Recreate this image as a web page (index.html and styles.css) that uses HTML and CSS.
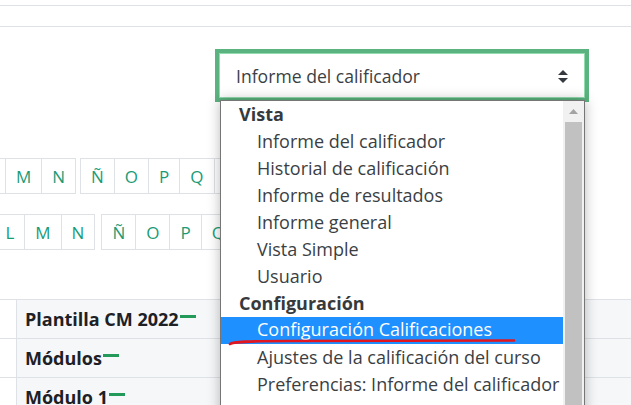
FILE: index.html
```html
<!DOCTYPE html>
<html lang="es">
<head>
	<meta charset="UTF-8">
	<title>Calificaciones</title>
	<link rel="stylesheet" href="styles.css">
</head>
<body>
	<div class="topbar"></div>

	<div class="page">
		<div class="jump">
			<div class="select">
				<span class="select-text">Informe del calificador</span>
				<svg class="select-arrows" width="10" height="13" viewBox="0 0 10 13">
					<path d="M5 0 L10 5 L0 5 Z" fill="#343a40"/>
					<path d="M0 8 L10 8 L5 13 Z" fill="#343a40"/>
				</svg>
			</div>
		</div>

		<div class="initials first">
			<div class="letters">
				<a class="letter">L</a><a class="letter">M</a><a class="letter">N</a>
			</div>
			<div class="letters">
				<a class="letter">Ñ</a><a class="letter">O</a><a class="letter">P</a><a class="letter">Q</a><a class="letter">R</a><a class="letter">S</a>
			</div>
		</div>
		<div class="initials last">
			<div class="letters">
				<a class="letter">K</a><a class="letter">L</a><a class="letter">M</a><a class="letter">N</a>
			</div>
			<div class="letters">
				<a class="letter">Ñ</a><a class="letter">O</a><a class="letter">P</a><a class="letter">Q</a><a class="letter">R</a><a class="letter">S</a>
			</div>
		</div>

		<div class="grades">
			<div class="grade-row">
				<div class="gutter"></div>
				<div class="cell">Plantilla CM 2022<span class="dash"></span></div>
			</div>
			<div class="grade-row">
				<div class="gutter"></div>
				<div class="cell">Módulos<span class="dash"></span></div>
			</div>
			<div class="grade-row">
				<div class="gutter"></div>
				<div class="cell">Módulo 1<span class="dash"></span></div>
			</div>
		</div>

		<!-- open list of the select, lies over the page -->
		<div class="dropdown">
			<div class="options">
				<div class="group">Vista</div>
				<div class="option">Informe del calificador</div>
				<div class="option">Historial de calificación</div>
				<div class="option">Informe de resultados</div>
				<div class="option">Informe general</div>
				<div class="option">Vista Simple</div>
				<div class="option">Usuario</div>
				<div class="group">Configuración</div>
				<div class="option selected">Configuración Calificaciones</div>
				<div class="option">Ajustes de la calificación del curso</div>
				<div class="option">Preferencias: Informe del calificador</div>
				<div class="option">Letras</div>
			</div>
			<div class="scrollbar">
				<div class="scroll-up">
					<svg width="9" height="5" viewBox="0 0 9 5"><path d="M4.5 0 L9 5 L0 5 Z" fill="#a3a3a3"/></svg>
				</div>
				<div class="thumb"></div>
			</div>
		</div>

		<svg class="underline" width="300" height="10" viewBox="0 0 300 10">
			<path d="M2 6 C 5 3.5, 20 3, 60 3 L 286 2.5" stroke="#e3161f" stroke-width="2.6" fill="none" stroke-linecap="round"/>
		</svg>
	</div>
</body>
</html>
```

FILE: styles.css
```css
html, body {
	margin: 0;
	padding: 0;
	background: #fff;
	overflow: hidden;
}

body {
	font-family: "Open Sans", "Noto Sans", sans-serif;
	color: #1d2125;
	width: 631px;
	height: 405px;
}

.topbar {
	margin-top: 5px;
	height: 20px;
	border-top: 1px solid #dee2e6;
	border-bottom: 1px solid #dee2e6;
}

.page {
	position: relative;
}

.jump {
	display: flex;
	padding: 22px 0 0 215px;
}

.select {
	box-sizing: border-box;
	width: 374px;
	height: 53px;
	border: 4px solid #5bb47f;
	box-shadow: inset 0 0 0 1px #93dcaf;
	display: flex;
	align-items: center;
	justify-content: space-between;
	padding: 0 17px 0 17px;
	background: #fff;
}

.select-text {
	font-size: 17.6px;
	color: #3b3f44;
	padding-top: 1px;
}

.select-arrows {
	margin-top: 1px;
}

/* initials bars */

.initials {
	display: flex;
	gap: 5px;
}

.initials.first {
	margin: 56px 0 0 -24px;
}

.initials.last {
	margin: 20px 0 0 -36px;
	gap: 7px;
}

.letters {
	display: flex;
}

.letter {
	box-sizing: border-box;
	height: 36px;
	padding: 0 10px;
	display: flex;
	align-items: center;
	justify-content: center;
	border: 1px solid #dee2e6;
	margin-left: -1px;
	font-size: 17px;
	color: #1a9b76;
}

/* grade table */

.grades {
	margin-top: 49px;
	border-top: 1px solid #dee2e6;
}

.grade-row {
	display: flex;
	height: 39px;
	border-bottom: 1px solid #dee2e6;
	box-sizing: border-box;
}

.gutter {
	width: 16px;
	border-right: 1px solid #dee2e6;
	background: #fff;
}

.cell {
	flex: 1;
	background: #f6f7f9;
	display: flex;
	align-items: center;
	padding-left: 8px;
	font-size: 18px;
	font-weight: 700;
	color: #1d2125;
}

.dash {
	display: inline-block;
	width: 16px;
	height: 3px;
	background: #23995a;
	margin: 0 0 5px 1px;
}

/* dropdown list */

.dropdown {
	position: absolute;
	left: 220px;
	top: 73px;
	width: 365px;
	height: 340px;
	box-sizing: border-box;
	border: 1px solid #767676;
	background: #fff;
	display: flex;
	box-shadow: 0 0 12px rgba(0, 0, 0, 0.28);
}

.options {
	flex: 1;
	font-size: 18px;
	color: #3b3f44;
	overflow: hidden;
}

.group,
.option {
	height: 27px;
	line-height: 27px;
	white-space: nowrap;
}

.group {
	padding-left: 18px;
	font-weight: 700;
	color: #373a3c;
}

.option {
	padding-left: 36px;
}

.option.selected {
	background: #1e90ff;
	color: #fff;
	line-height: 25px;
}

.scrollbar {
	width: 21px;
	background: #f1f1f1;
	display: flex;
	flex-direction: column;
	align-items: center;
}

.scroll-up {
	height: 21px;
	display: flex;
	align-items: center;
	justify-content: center;
}

.thumb {
	width: 17px;
	flex: 1;
	background: #c1c1c1;
}

.underline {
	position: absolute;
	left: 228px;
	top: 311px;
}
```
